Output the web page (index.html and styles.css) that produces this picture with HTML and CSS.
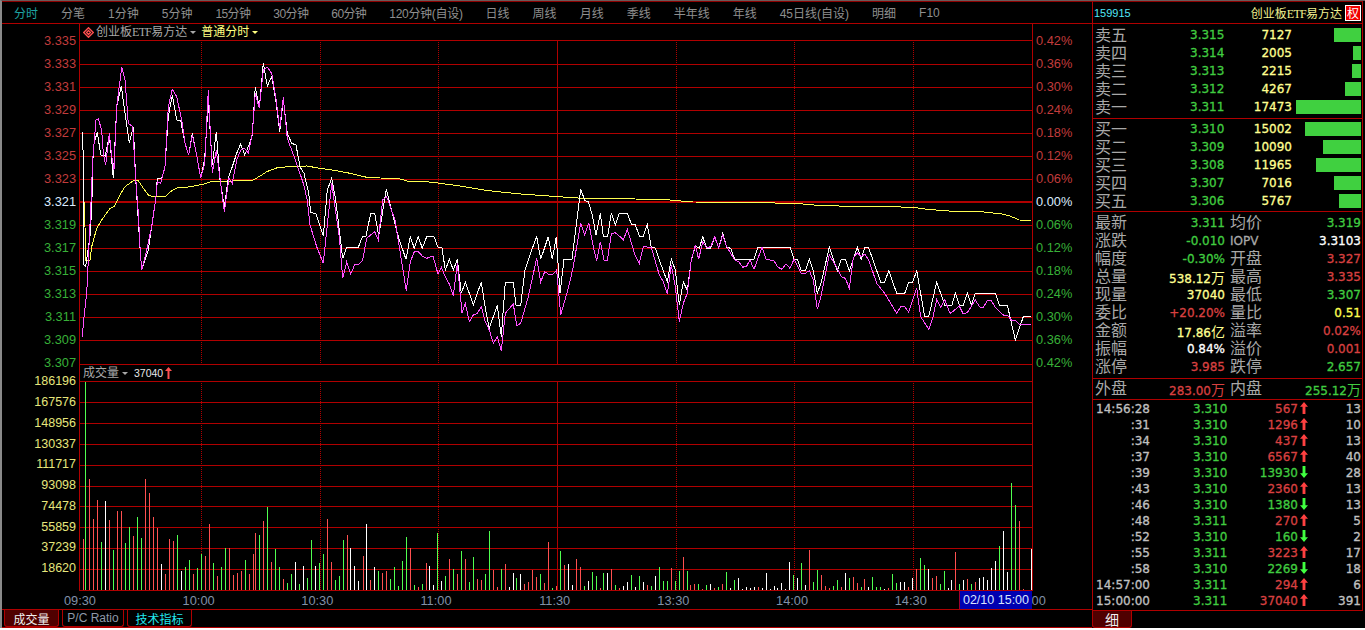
FILE: index.html
```html
<!DOCTYPE html>
<html lang="zh">
<head>
<meta charset="utf-8">
<title>159915 分时</title>
<link rel="stylesheet" href="styles.css">
</head>
<body>
<div class="app">
  <section class="left">
    <nav class="tabs">
      <span class="tab active">分时</span><span class="tab">分笔</span><span class="tab">1分钟</span><span class="tab">5分钟</span><span class="tab tab-num">15分钟</span><span class="tab tab-num">30分钟</span><span class="tab tab-num">60分钟</span><span class="tab tab-wide">120分钟(自设)</span><span class="tab">日线</span><span class="tab">周线</span><span class="tab">月线</span><span class="tab">季线</span><span class="tab">半年线</span><span class="tab">年线</span><span class="tab">45日线(自设)</span><span class="tab">明细</span><span class="tab">F10</span>
    </nav>
    <div class="main">
      <div class="axis axis-left">
        <div class="scale">
          <span class="up">3.335</span><span class="up">3.333</span><span class="up">3.331</span><span class="up">3.329</span><span class="up">3.327</span><span class="up">3.325</span><span class="up">3.323</span><span class="zero">3.321</span><span class="down">3.319</span><span class="down">3.317</span><span class="down">3.315</span><span class="down">3.313</span><span class="down">3.311</span><span class="down">3.309</span><span class="down">3.307</span>
        </div>
        <div class="scale scale-vol">
          <span>186196</span><span>167576</span><span>148956</span><span>130337</span><span>111717</span><span>93098</span><span>74478</span><span>55859</span><span>37239</span><span>18620</span>
        </div>
      </div>
      <div class="chart">
        <svg class="plot" width="954" height="567" viewBox="79 24 954 567" xmlns="http://www.w3.org/2000/svg">
          <g class="grid">
            <path d="M79 40.5H1032M79 64.5H1032M79 87.5H1032M79 110.5H1032M79 133.5H1032M79 156.5H1032M79 179.5H1032M79 225.5H1032M79 248.5H1032M79 271.5H1032M79 294.5H1032M79 317.5H1032M79 340.5H1032M79 364.5H1032M79 381.5H1032M79 402.5H1032M79 423.5H1032M79 444.5H1032M79 465.5H1032M79 486.5H1032M79 506.5H1032M79 527.5H1032M79 548.5H1032M79 569.5H1032M79 590.5H1032"/>
            <path d="M79.5 24V591M1032.5 24V591M557.5 40V364M557.5 381V590"/>
            <path class="dots" d="M201.5 40V364M201.5 381V590M320.5 40V364M320.5 381V590M438.5 40V364M438.5 381V590M676.5 40V364M676.5 381V590M794.5 40V364M794.5 381V590M913.5 40V364M913.5 381V590"/>
            <path class="base" d="M79 202H1032"/>
          </g>
          <polyline class="line avg" points="84,202 84,212 85.7,238 85.7,260 90,260 91.7,246.7 96.7,228.3 101.7,220 110,208.3 114,206.7 120,195 125,186.7 133.3,180.7 138.3,180.7 143.3,188.3 148.3,195 153.3,196.7 165,196.7 171.7,190.7 178.3,187.3 186.7,187.3 203.3,184.3 210,182 253.3,180 261.7,175 266.7,171.7 278.3,167.3 306.7,166 320,168.3 336.7,170.7 350,173.3 366.7,177.3 400,179 410,181.7 426.7,181.7 440,183.3 460,186 488.6,190.7 521,194 558,196.7 582.4,198.3 635.5,199 670,200 692.7,202 750,202.3 800,203.7 816.7,205.3 848.3,206.3 895,206.7 918.3,208 926.7,209.3 953.3,211.3 981.7,211.7 1001.7,214 1010,216 1019.3,220 1031,220.3"/>
          <polyline class="line price" points="82.3,132.3 83.3,156.7 84,265 85.7,266.7 90,236 91.7,210 93.3,146.7 97.3,131.7 100.7,155 105.3,156 109.3,135 113.3,178 116.7,106.7 121.3,86 125,113.3 129.3,143.3 133.3,126.7 135.7,178.3 140,248.3 141.7,270 148.3,250 151.7,226.7 156,196.7 157.3,178.3 161.7,178.3 165,166.7 168.3,116.7 172.3,95 176.7,120 180.7,120.7 185,143.3 188.7,155 192.3,133.3 196.7,155 200.7,178.3 204.7,158.3 208.3,101.7 212.3,165 216.3,131.7 220,180 224.3,206.7 228.3,178.3 232.3,166.7 236.7,153.3 240.7,144 244.7,155 248.3,146.7 252.3,135 255.3,86.7 259.3,108.3 263.3,63.3 267.3,86 271.7,76.7 275.7,100 279.7,131.7 283.3,99.3 287.3,133.3 291.7,143.3 296,145 300,166.7 304,173.3 308.7,193.3 310.7,212.7 315.7,213.3 323.3,236 327.3,190 331.7,178.3 335.7,200 342.7,258.3 346.7,247.3 358.3,247.3 362.7,236 366,236 370.7,213.3 374.7,213.3 378.7,236 386.3,189.3 398.3,236.7 406,259.3 410.3,236.7 414.3,248.3 418.3,236.7 422.3,248.3 426.7,236.7 434,236.7 438,247.3 442,248 445.3,270 449.3,259.3 453.3,270 457.3,259.3 461.3,293.3 465.3,282 469.3,293.3 473.3,305 477.3,293.3 481.3,282 485.3,308.3 489.3,328.3 493.3,316.7 497.3,305 501.3,336.7 505.3,282 513.3,282 516,305 520.7,305 525,270 532.7,247.3 536.7,236.7 540.7,259.3 548.3,236.7 552.3,259.3 556.3,236.7 560,293.3 564,259.3 572,259.3 580.7,189.3 585,200.7 588.3,201.7 592.3,215 596,235 600.3,213.3 603.3,236 607.7,236 611.3,213.3 615.3,225 619.3,213.3 627.3,213.3 631.3,224 635.3,224.7 639.3,236 643.3,236 647.3,224.7 651.3,247.3 655.3,248 659.3,260 667.3,281.7 671.3,259.3 675.3,270 679.3,305 683.3,282 687.3,290 691.3,260 695.3,246 699.3,248.3 702.7,236.7 706.7,248.3 710.7,248.3 714.7,236.7 718.7,248.3 722.7,233.3 726.7,247.3 730.7,248.3 734.7,259.3 754,259.3 758,247.3 790,247.3 794,259.3 797.3,259.3 801.3,270.7 805.3,270.7 809.3,259.3 813.3,270.7 817.3,293.3 821.3,282 829.3,247.3 837.3,270.7 841.3,259.3 845.3,259.3 849.3,270.7 857.3,247.3 861.3,259.3 864.7,247.3 868.7,248 880.7,282 884.7,282 888.7,270.7 896.7,293.3 904.7,293.3 908.7,282 912.7,282 916.7,270.7 924.7,316.7 928.7,316.7 936.7,282 944.7,305 952,305 955.3,293.3 959.3,305 963.3,305 967.3,293.3 971.3,305 975.3,293.3 995.3,293.3 999.3,305 1007.3,305 1015.3,340 1023.3,316.7 1031,316.7"/>
          <polyline class="line mix" points="82.3,336.7 84,316.7 86.7,293.3 88.3,260 90.7,210 92.7,160 96,120 98.3,119 101.7,130 103.3,153.3 105.7,165 109.3,133.3 111.7,156.7 114,170 116.7,106.7 121.7,67.3 125,80 128.3,123.3 132.7,126.7 135.7,178.3 138.3,213.3 140,246.7 141.7,270 146.7,250 151.7,226.7 156,196.7 157.3,181.7 160.7,183.3 165,166.7 168.3,106.7 172.3,89.3 176.7,96.7 181.7,120 185,143.3 188.7,155 192.3,135 196.7,155 200.7,178.3 204.7,163.3 208.3,90 212.3,173.3 216.3,150 220,178.3 224.3,211.7 229,178.3 232.3,183.3 236.7,160 240.7,150 244.7,148.3 248.3,153.3 252.3,133.3 255.3,93.3 259.3,108.3 263.3,70 267.3,67.3 271.7,73.3 275.7,96.7 279.7,128.3 283.3,97.3 287.3,138.3 296,161.7 303.3,183.3 307.3,200 310,225 316.7,246.7 323.3,263.3 331.7,183.3 339.3,236.7 342.7,278.3 346.7,261.7 350.7,274 354.7,264.7 358.7,264.7 362.7,260 366.7,238.3 374.7,231.7 378.3,240 382.7,200 386.7,196.7 395,220 406.3,290.7 410.3,261.7 414.3,251.7 418.3,251.7 422.3,256 426.7,258.3 433,256 438,274 441.3,267.3 445.3,276.7 449.3,284 453.3,296 457.3,263.3 461.3,305 462,313.3 465.3,303.3 469.3,321.7 473.3,315 477.3,313.3 481.3,306.7 485.3,321.7 489.3,330 493.3,343.3 497.3,336.7 501.3,351 505.3,313.3 513.3,304 516.7,325.7 520.7,323.3 528.3,296.7 536.7,258.3 540.7,281.7 544.7,271.7 548.7,274.3 552.7,274.3 556.7,270 560.7,315 568.7,286.7 573.3,266.7 580.7,222.7 584.7,235 588.7,222.7 593.3,246.7 596.7,261 600.3,241.7 604,260 607.3,260.7 611.3,234 615.3,232.7 619.3,236 623.3,240 627.3,229.3 635.3,256 639.3,263.3 643.3,246.7 651.3,247.3 659.3,275 663.3,281.7 667.3,294.3 671.3,265 675.3,286.7 679.3,321.7 683.3,303.3 687.3,293.3 691.3,260 695.3,245.3 698.7,259.3 702.7,241.7 706.7,247.7 710.7,246.7 714.7,236.7 718.7,248.3 722.7,235 726.7,246.7 734.7,260 738.7,261.7 742.7,267.3 746.7,266 750,260 754,269.3 758,258.3 762,247.3 766,259.3 774,260.7 778,267.3 782,269.3 786,264 790,268.3 794,259.3 801.3,273.3 805.3,273.3 809.3,270.7 813.3,280 817.3,309.3 821.3,295 829.3,255 837.3,268.3 841.3,276.7 845.3,278.3 849.3,288.3 853.3,258.3 857.3,252.7 861.3,256.7 864.7,254 868.7,260 876.7,283.3 884.7,293.3 888.7,300 896.7,313.3 900.7,306.7 904.7,306.7 908.7,312.3 916.7,288.3 920.7,316.7 928.7,329.3 932.7,318.3 936.7,299.3 940.7,307.3 944.7,299.3 950,313.3 952.7,311.7 959.3,306 963.3,314 967.3,312.7 975.3,300 980,307.3 983.3,307.3 987.3,300.7 991.3,300.7 995.3,307.3 1003.3,315 1007.3,315 1011.3,320 1015.3,320 1019.3,324.3 1031,324.3"/>
          <g class="bars" transform="translate(.5 0)">
            <path class="bar-red" d="M83 539V590M89 479V590M93 519V590M97 500V590M109 520V590M117 511V590M121 511V590M133 536V590M145 479V590M149 493V590M153 517V590M157 528V590M165 574V590M169 539V590M173 541V590M193 574V590M205 556V590M209 524V590M217 576V590M229 548V590M233 575V590M237 573V590M241 571V590M249 574V590M253 554V590M255 533V590M263 521V590M271 562V590M283 579V590M327 519V590M331 562V590M347 535V590M363 556V590M370 580V590M382 573V590M386 571V590M410 548V590M418 587V590M426 563V590M449 559V590M457 574V590M465 559V590M477 579V590M481 580V590M493 570V590M497 587V590M505 564V590M524 584V590M528 582V590M532 570V590M536 577V590M544 583V590M548 542V590M556 586V590M564 565V590M576 559V590M580 567V590M600 588V590M611 569V590M619 588V590M647 585V590M671 568V590M683 557V590M690 585V590M694 584V590M702 589V590M714 588V590M722 584V590M758 587V590M809 550V590M821 575V590M825 586V590M829 588V590M841 587V590M853 577V590M857 583V590M864 579V590M888 588V590M908 587V590M916 569V590M932 578V590M936 576V590M955 552V590M967 579V590M975 582V590M1019 521V590M1023 589V590"/>
            <path class="bar-green" d="M85 382V590M101 542V590M113 550V590M125 543V590M129 527V590M137 517V590M141 538V590M177 535V590M185 567V590M189 560V590M197 568V590M201 554V590M213 563V590M221 567V590M225 548V590M245 560V590M259 535V590M267 507V590M275 549V590M279 567V590M287 583V590M291 574V590M299 584V590M307 578V590M311 540V590M319 563V590M323 554V590M335 580V590M339 576V590M343 540V590M378 571V590M390 579V590M394 567V590M398 586V590M402 561V590M406 537V590M414 585V590M422 584V590M437 533V590M445 576V590M453 569V590M461 551V590M469 582V590M473 557V590M485 574V590M489 531V590M501 569V590M516 578V590M540 574V590M552 588V590M560 551V590M584 586V590M592 572V590M596 576V590M603 573V590M615 585V590M631 575V590M639 576V590M651 586V590M659 567V590M663 581V590M667 581V590M675 581V590M679 571V590M687 571V590M698 584V590M706 585V590M718 587V590M726 572V590M734 580V590M793 575V590M801 563V590M813 582V590M817 570V590M833 586V590M837 580V590M849 578V590M861 587V590M872 577V590M876 587V590M880 587V590M892 574V590M896 583V590M920 558V590M924 565V590M940 584V590M944 571V590M959 584V590M971 584V590M999 546V590M1011 483V590M1015 505V590"/>
            <path class="bar-white" d="M105 501V590M161 564V590M181 571V590M295 562V590M303 566V590M315 566V590M350 548V590M354 566V590M358 581V590M366 524V590M374 567V590M429 566V590M433 585V590M441 581V590M509 587V590M513 573V590M520 574V590M568 564V590M572 585V590M588 581V590M607 573V590M623 586V590M627 582V590M635 587V590M643 582V590M655 576V590M710 584V590M730 588V590M738 578V590M742 589V590M746 587V590M750 588V590M754 587V590M762 588V590M766 573V590M770 589V590M774 586V590M777 588V590M781 583V590M785 589V590M789 562V590M797 578V590M805 585V590M845 573V590M868 587V590M884 589V590M900 582V590M904 582V590M912 578V590M928 569V590M948 588V590M951 580V590M963 580V590M979 578V590M983 577V590M987 580V590M991 568V590M995 561V590M1003 531V590M1007 572V590M1031 549V590"/>
          </g>
        </svg>
        <div class="chart-title">
          <svg class="diamond" width="11" height="11" viewBox="0 0 11 11" xmlns="http://www.w3.org/2000/svg"><path d="M5.500.7 10.300 5.500 5.500 10.300.7 5.500Z"/><path d="M5.500 3.500 7.500 5.500 5.500 7.500 3.500 5.500Z"/></svg>
          <span class="name">创业板<i class="latin">ETF</i>易方达</span><b class="caret"></b>
          <span class="mode">普通分时</span><b class="caret caret-y"></b>
        </div>
        <div class="vol-title">
          <span class="name">成交量</span><b class="caret"></b>
          <span class="vol-num">37040</span>
          <svg class="thin-up" width="7" height="12" viewBox="0 0 7 12" xmlns="http://www.w3.org/2000/svg"><path d="M3.500 0 7 4H4.500V12H2.500V4H0Z"/></svg>
        </div>
      </div>
      <div class="axis axis-right">
        <div class="scale">
          <span class="up">0.42%</span><span class="up">0.36%</span><span class="up">0.30%</span><span class="up">0.24%</span><span class="up">0.18%</span><span class="up">0.12%</span><span class="up">0.06%</span><span class="zero">0.00%</span><span class="down">0.06%</span><span class="down">0.12%</span><span class="down">0.18%</span><span class="down">0.24%</span><span class="down">0.30%</span><span class="down">0.36%</span><span class="down">0.42%</span>
        </div>
      </div>
    </div>
    <div class="times">
      <span>09:30</span><span>10:00</span><span>10:30</span><span>11:00</span><span>11:30</span><span>13:30</span><span>14:00</span><span>14:30</span><span class="tail">00</span>
      <div class="cursor-tag">02/10 15:00</div>
    </div>
    <div class="sheets">
      <span class="sheet sheet-on">成交量</span><span class="sheet">P/C Ratio</span><span class="sheet sheet-cyan">技术指标</span>
    </div>
  </section>

  <aside class="right">
    <div class="panel">
      <header class="ph">
        <span class="code">159915</span>
        <span class="ph-name">创业板<i class="latin">ETF</i>易方达</span>
        <span class="quan">权</span>
      </header>
      <div class="book book-sell">
        <div class="lv"><span class="cn">卖五</span><span class="g">3.315</span><span class="y q">7127</span><span class="bc"><i class="bar" style="width:27px"></i></span></div>
        <div class="lv"><span class="cn">卖四</span><span class="g">3.314</span><span class="y q">2005</span><span class="bc"><i class="bar" style="width:8px"></i></span></div>
        <div class="lv"><span class="cn">卖三</span><span class="g">3.313</span><span class="y q">2215</span><span class="bc"><i class="bar" style="width:9px"></i></span></div>
        <div class="lv"><span class="cn">卖二</span><span class="g">3.312</span><span class="y q">4267</span><span class="bc"><i class="bar" style="width:16px"></i></span></div>
        <div class="lv"><span class="cn">卖一</span><span class="g">3.311</span><span class="y q">17473</span><span class="bc"><i class="bar" style="width:65px"></i></span></div>
      </div>
      <div class="book book-buy">
        <div class="lv"><span class="cn">买一</span><span class="g">3.310</span><span class="y q">15002</span><span class="bc"><i class="bar" style="width:56px"></i></span></div>
        <div class="lv"><span class="cn">买二</span><span class="g">3.309</span><span class="y q">10090</span><span class="bc"><i class="bar" style="width:38px"></i></span></div>
        <div class="lv"><span class="cn">买三</span><span class="g">3.308</span><span class="y q">11965</span><span class="bc"><i class="bar" style="width:45px"></i></span></div>
        <div class="lv"><span class="cn">买四</span><span class="g">3.307</span><span class="y q">7016</span><span class="bc"><i class="bar" style="width:27px"></i></span></div>
        <div class="lv"><span class="cn">买五</span><span class="g">3.306</span><span class="y q">5767</span><span class="bc"><i class="bar" style="width:22px"></i></span></div>
      </div>
      <div class="stats">
        <div class="st"><span class="cn">最新</span><span class="v g">3.311</span><span class="cn k2">均价</span><span class="v g">3.319</span></div>
        <div class="st"><span class="cn">涨跌</span><span class="v g">-0.010</span><span class="k2 iopv">IOPV</span><span class="v w">3.3103</span></div>
        <div class="st"><span class="cn">幅度</span><span class="v g">-0.30%</span><span class="cn k2">开盘</span><span class="v r">3.327</span></div>
        <div class="st"><span class="cn">总量</span><span class="v y">538.12<u>万</u></span><span class="cn k2">最高</span><span class="v r">3.335</span></div>
        <div class="st"><span class="cn">现量</span><span class="v y">37040</span><span class="cn k2">最低</span><span class="v g">3.307</span></div>
        <div class="st"><span class="cn">委比</span><span class="v r">+20.20%</span><span class="cn k2">量比</span><span class="v yy">0.51</span></div>
        <div class="st"><span class="cn">金额</span><span class="v y">17.86<u>亿</u></span><span class="cn k2">溢率</span><span class="v r">0.02%</span></div>
        <div class="st"><span class="cn">振幅</span><span class="v w">0.84%</span><span class="cn k2">溢价</span><span class="v r">0.001</span></div>
        <div class="st"><span class="cn">涨停</span><span class="v r">3.985</span><span class="cn k2">跌停</span><span class="v g">2.657</span></div>
      </div>
      <div class="outer">
        <div class="st"><span class="cn">外盘</span><span class="v r">283.00<u>万</u></span><span class="cn k2">内盘</span><span class="v g">255.12<u>万</u></span></div>
      </div>
      <div class="ticks">
        <div class="tk"><span class="t">14:56:28</span><span class="p g">3.310</span><span class="n r">567</span><i class="arr a-up"></i><span class="c">13</span></div>
        <div class="tk"><span class="t">:31</span><span class="p g">3.310</span><span class="n r">1296</span><i class="arr a-up"></i><span class="c">10</span></div>
        <div class="tk"><span class="t">:34</span><span class="p g">3.310</span><span class="n r">437</span><i class="arr a-up"></i><span class="c">13</span></div>
        <div class="tk"><span class="t">:37</span><span class="p g">3.310</span><span class="n r">6567</span><i class="arr a-up"></i><span class="c">40</span></div>
        <div class="tk"><span class="t">:39</span><span class="p g">3.310</span><span class="n g">13930</span><i class="arr a-dn"></i><span class="c">28</span></div>
        <div class="tk"><span class="t">:43</span><span class="p g">3.310</span><span class="n r">2360</span><i class="arr a-up"></i><span class="c">13</span></div>
        <div class="tk"><span class="t">:46</span><span class="p g">3.310</span><span class="n g">1380</span><i class="arr a-dn"></i><span class="c">13</span></div>
        <div class="tk"><span class="t">:48</span><span class="p g">3.311</span><span class="n r">270</span><i class="arr a-up"></i><span class="c">5</span></div>
        <div class="tk"><span class="t">:52</span><span class="p g">3.310</span><span class="n g">160</span><i class="arr a-dn"></i><span class="c">2</span></div>
        <div class="tk"><span class="t">:55</span><span class="p g">3.311</span><span class="n r">3223</span><i class="arr a-up"></i><span class="c">17</span></div>
        <div class="tk"><span class="t">:58</span><span class="p g">3.310</span><span class="n g">2269</span><i class="arr a-dn"></i><span class="c">18</span></div>
        <div class="tk"><span class="t">14:57:00</span><span class="p g">3.311</span><span class="n r">294</span><i class="arr a-up"></i><span class="c">6</span></div>
        <div class="tk"><span class="t">15:00:00</span><span class="p g">3.311</span><span class="n r">37040</span><i class="arr a-up"></i><span class="c">391</span></div>
      </div>
    </div>
    <div class="right-sheets"><span class="sheet sheet-on sheet-xi">细</span></div>
  </aside>
</div>
</body>
</html>
```

FILE: styles.css
```css
* { box-sizing: border-box; }
html, body { margin: 0; padding: 0; }
body {
  width: 1365px; height: 630px; overflow: hidden; background: #fff;
  font-family: "Liberation Sans", "Noto Sans CJK SC", sans-serif;
}
i, u, b { font-style: normal; text-decoration: none; font-weight: normal; }
.app {
  display: flex; width: 1365px; height: 628px; background: #000;
  border-top: 1px solid #6a5a5a; border-left: 2px solid #8a8a8a;
}

/* left */
.left { width: 1090px; display: flex; flex-direction: column; border-top: 1px solid #8c0000; }
.tabs {
  height: 22px; display: flex; align-items: center; gap: 23px; padding-left: 12px;
  border-bottom: 1px solid #b00000; font-size: 12px; color: #8f8f8f; white-space: nowrap;
}
.tab.active { color: #1fa3a3; }
.tab-num { letter-spacing: -.6px; }
.tab-wide { letter-spacing: -.3px; }
.main { display: flex; height: 567px; }
.axis { font-size: 12.8px; line-height: 16px; }
.axis-left { width: 77px; padding: 8.5px 3px 0 0; text-align: right; }
.axis-right { width: 59px; padding: 8.5px 0 0 3px; }
.scale { display: flex; flex-direction: column; gap: 7.07px; }
.scale-vol { margin-top: 2px; gap: 4.75px; color: #e6e67c; font-size: 12.5px; }
.up { color: #c23c3c; }
.zero { color: #dcecff; }
.down { color: #38b038; }
.chart { position: relative; width: 954px; height: 567px; }
.plot { display: block; }
.grid path { fill: none; stroke: #b00000; stroke-width: 1; shape-rendering: crispEdges; }
.grid .dots { stroke-dasharray: 1 1; }
.grid .base { stroke-width: 2; }
.line { fill: none; stroke-width: 1; shape-rendering: crispEdges; }
.avg { stroke: #ffff50; }
.price { stroke: #fff; }
.mix { stroke: #ff50ff; }
.bars path { fill: none; stroke-width: 1; shape-rendering: crispEdges; }
.bar-red { stroke: #ff5050; }
.bar-green { stroke: #50ff50; }
.bar-white { stroke: #fff; }
.chart-title, .vol-title {
  position: absolute; left: 4px; height: 16px; display: flex; align-items: center;
  font-size: 12px; line-height: 16px; white-space: nowrap;
}
.chart-title { top: 0; }
.vol-title { top: 341px; }
.diamond { margin-right: 2px; }
.diamond path { fill: none; stroke: #ff5050; stroke-width: 1.3; }
.name { color: #a8a8a8; }
.latin { font-family: "Liberation Serif", serif; font-size: 12px; letter-spacing: -.7px; }
.caret { width: 0; height: 0; margin: 0 0 0 3px; border: 3px solid transparent; border-top: 3px solid #a8a8a8; border-bottom: 0; }
.caret-y { border-top-color: #ffff80; }
.mode { color: #ffff80; margin-left: 5px; }
.vol-num { color: #e8e8e8; font-size: 10.5px; margin-left: 6px; }
.thin-up { margin-left: 2px; fill: #ff5050; }
.times {
  position: relative; height: 19px; display: grid; grid-template-columns: repeat(9, 118.7px);
  padding-left: 18.6px; font-size: 12.8px; line-height: 19px; color: #8090a8; text-align: center;
  border-bottom: 1px solid #b00000;
}
.tail { text-align: left; padding-left: 61.5px; }
.cursor-tag {
  position: absolute; left: 957px; top: 0; width: 73px; height: 18px; background: #0000b0;
  border-left: 1px solid #a00030; color: #d8e4ff; font-size: 12.5px; line-height: 19px; white-space: nowrap; text-align: center;
}
.sheets {
  height: 18px; display: flex; gap: 3px; padding-left: 2px; border-bottom: 1px solid #b00000;
  font-size: 12px;
}
.sheet {
  display: flex; align-items: center; justify-content: center; height: 17px; white-space: nowrap;
  border: 1px solid #b00000; border-top: 0; border-radius: 0 0 3px 3px; color: #8f98a8; padding: 0;
}
.sheets .sheet:nth-child(1) { width: 55px; }
.sheets .sheet:nth-child(2) { width: 62px; }
.sheets .sheet:nth-child(3) { width: 65px; }
.sheet-on { background: #500000; color: #f0f0f0; }
.sheet-cyan { color: #22e8f0; }

/* right */
.right { width: 271px; display: flex; flex-direction: column; }
.panel {
  height: 610px; border-top: 1px solid #8c0000; border-left: 1px solid #b00000; border-right: 1px solid #b00000; border-bottom: 1px solid #b00000;
  display: flex; flex-direction: column; font-family: "DejaVu Sans", "Noto Sans CJK SC", sans-serif; font-size: 12px;
  -webkit-text-stroke: .3px;
}
.ph { height: 22px; display: flex; align-items: center; padding: 0 1px 0 1px; border-bottom: 1px solid #b00000; -webkit-text-stroke: 0; }
.code { color: #50e8f8; font-family: "Liberation Sans", sans-serif; font-size: 11px; }
.ph-name { margin-left: auto; color: #f0f090; font-family: "Liberation Sans", "Noto Sans CJK SC", sans-serif; }
.quan { width: 16px; height: 16px; margin-left: 3px; background: #f00000; color: #fff; font-size: 12px; text-align: center; font-family: "Noto Sans CJK SC", sans-serif; border: 1px solid #fff; line-height: 13px; }
.cn { font-family: "Noto Sans CJK SC", sans-serif; font-size: 16px; color: #a8a8a8; line-height: 16px; white-space: nowrap; -webkit-text-stroke: 0; }
.book { display: flex; flex-direction: column; border-bottom: 1px solid #b00000; padding-left: 2px; }
.book-sell { padding-top: 2px; padding-bottom: 2px; }
.book-buy { padding-top: 1px; padding-bottom: 1px; }
.lv { display: grid; grid-template-columns: 95px 50px 52px 69px; height: 18px; line-height: 18px; }
.q { text-align: right; }
.bc { display: flex; justify-content: flex-end; align-items: center; }
.bar { display: block; height: 14px; background: #40d040; }
.g { color: #40cc40; }
.y { color: #ffff90; }
.yy { color: #ffff50; }
.r { color: #d84040; }
.w { color: #fff; }
.stats { padding: 2px 0 2px 2px; border-bottom: 1px solid #b00000; }
.st { display: grid; grid-template-columns: 32px 98px 37px 99px; height: 18px; line-height: 18px; }
.st .cn { line-height: 15px; }
.outer { height: 21px; padding: 1px 0 0 2px; border-bottom: 1px solid #b00000; }
.outer .st { height: 19px; }
.v { text-align: right; white-space: nowrap; }
.v u { font-family: "Noto Sans CJK SC", sans-serif; font-size: 14px; -webkit-text-stroke: 0; }
.k2 { padding-left: 5px; }
.iopv { color: #a8a8a8; white-space: nowrap; }
.ticks { padding-left: 2px; }
.tk { display: grid; grid-template-columns: 55px 90px 58px 12px 51px; height: 16px; line-height: 18px; }
.t { color: #c0c0c0; text-align: right; white-space: nowrap; }
.p { padding-left: 43px; }
.n { text-align: right; }
.c { color: #c0c0c0; text-align: right; }
.arr { display: block; width: 8px; height: 12px; margin: 2px 0 0 2px; }
.a-up { background: #ff4040; clip-path: polygon(50% 0, 100% 40%, 68% 40%, 68% 100%, 32% 100%, 32% 40%, 0 40%); }
.a-dn { background: #40ff40; clip-path: polygon(32% 0, 68% 0, 68% 60%, 100% 60%, 50% 100%, 0 60%, 32% 60%); }
.right-sheets { height: 17px; display: flex; }
.sheet-xi { width: 40px; height: 17px; font-family: "Noto Sans CJK SC", sans-serif; font-size: 14px; }
```
